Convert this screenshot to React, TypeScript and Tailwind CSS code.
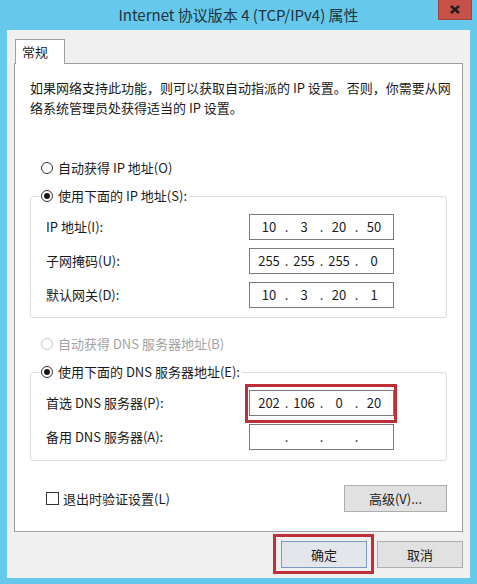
import { Fragment } from "react"

function Radio({ checked, disabled, label }: { checked?: boolean; disabled?: boolean; label: string }) {
  return (
    <div className="flex items-center h-[20px]">
      <span
        className={`w-[12px] h-[12px] rounded-full border bg-white flex items-center justify-center ${
          disabled ? "border-[#c8c8c8]" : "border-[#333333]"
        }`}
      >
        {checked && <span className="w-[6px] h-[6px] rounded-full bg-[#1a1a1a]" />}
      </span>
      <span className={`ml-[5px] whitespace-nowrap ${disabled ? "text-[#a3a3a3]" : "text-[#1a1a1a]"}`}>{label}</span>
    </div>
  )
}

function IpField({ parts, marked }: { parts: string[]; marked?: boolean }) {
  return (
    <div className="relative w-[145px] h-[26px] border border-[#7a7a7a] bg-white flex items-center pl-[4px]">
      {parts.map((p, i) => (
        <Fragment key={i}>
          <span className="w-[30px] text-center">{p}</span>
          {i < 3 && <span className="w-[5px] text-center">.</span>}
        </Fragment>
      ))}
      {/* 红色标注框 */}
      {marked && (
        <span className="pointer-events-none absolute -left-[5px] -top-[7px] -right-[4px] -bottom-[8px] border-[3px] border-[#bf2f38]" />
      )}
    </div>
  )
}

function Row({ label, parts, marked }: { label: string; parts: string[]; marked?: boolean }) {
  return (
    <div className="flex items-center">
      <span className="w-[203px] whitespace-nowrap">{label}</span>
      <IpField parts={parts} marked={marked} />
    </div>
  )
}

export default function App() {
  return (
    <div className="w-[477px] h-[584px] bg-[#66c8ea] overflow-hidden text-[13px] leading-[20px] text-[#1a1a1a] font-['Noto_Sans_CJK_SC','Noto_Sans',sans-serif]">
      {/* 标题栏 */}
      <div className="relative h-[30px] flex items-center justify-center">
        <span className="text-[15px] text-[#1e3440]">Internet 协议版本 4 (TCP/IPv4) 属性</span>
        <button className="absolute right-[5px] top-0 w-[34px] h-[20px] bg-[#c75049] border border-t-0 border-[#a5423d] flex items-center justify-center">
          <svg width="10" height="9" viewBox="0 0 10 9">
            <path d="M1 1 L9 8 M9 1 L1 8" stroke="#1d1d1d" strokeWidth="2.4" />
          </svg>
        </button>
      </div>

      {/* 客户区 */}
      <div className="mx-[7px] h-[548px] bg-[#f0f0f0] px-[7px] pt-[9px]">
        {/* 选项卡 */}
        <div className="relative z-10 ml-[1px] -mb-[1px] w-[50px] h-[25px] bg-white border border-b-0 border-[#a0a0a0] pl-[6px] flex items-center">
          常规
        </div>

        <div className="h-[469px] bg-white border border-[#a0a0a0]">
          <p className="mt-[14px] pl-[15px] whitespace-nowrap">
            如果网络支持此功能，则可以获取自动指派的 IP 设置。否则，你需要从网
            <br />
            络系统管理员处获得适当的 IP 设置。
          </p>

          <div className="mt-[40px] pl-[26px]">
            <Radio label="自动获得 IP 地址(O)" />
          </div>

          <fieldset className="mt-[8px] ml-[15px] w-[417px] border border-[#dcdcdc] rounded-[3px] pl-[15px] pb-[9px]">
            <legend className="ml-[-7px] px-[2px]">
              <Radio checked label="使用下面的 IP 地址(S):" />
            </legend>
            <div className="mt-[8px] flex flex-col gap-[8px]">
              <Row label="IP 地址(I):" parts={["10", "3", "20", "50"]} />
              <Row label="子网掩码(U):" parts={["255", "255", "255", "0"]} />
              <Row label="默认网关(D):" parts={["10", "3", "20", "1"]} />
            </div>
          </fieldset>

          <div className="mt-[16px] pl-[26px]">
            <Radio disabled label="自动获得 DNS 服务器地址(B)" />
          </div>

          <fieldset className="mt-[8px] ml-[15px] w-[417px] border border-[#dcdcdc] rounded-[3px] pl-[15px] pb-[10px]">
            <legend className="ml-[-7px] px-[2px]">
              <Radio checked label="使用下面的 DNS 服务器地址(E):" />
            </legend>
            <div className="mt-[8px] flex flex-col gap-[8px]">
              <Row label="首选 DNS 服务器(P):" parts={["202", "106", "0", "20"]} marked />
              <Row label="备用 DNS 服务器(A):" parts={["", "", "", ""]} />
            </div>
          </fieldset>

          <div className="mt-[24px] ml-[15px] w-[417px] pl-[16px] flex items-center justify-between">
            <label className="flex items-center">
              <span className="w-[13px] h-[13px] border border-[#333333] bg-white" />
              <span className="ml-[4px]">退出时验证设置(L)</span>
            </label>
            <button className="w-[103px] h-[27px] bg-[#e1e1e1] border border-[#adadad]">高级(V)...</button>
          </div>
        </div>

        {/* 底部按钮 */}
        <div className="mt-[9px] flex justify-end gap-[10px]">
          <button className="relative w-[86px] h-[27px] bg-[#e3e6ea] border border-[#7b98bd]">
            确定
            <span className="pointer-events-none absolute -left-[9px] -top-[8px] -right-[8px] -bottom-[7px] border-[3px] border-[#bf2f38]" />
          </button>
          <button className="w-[86px] h-[27px] bg-[#e1e1e1] border border-[#adadad]">取消</button>
        </div>
      </div>
    </div>
  )
}
